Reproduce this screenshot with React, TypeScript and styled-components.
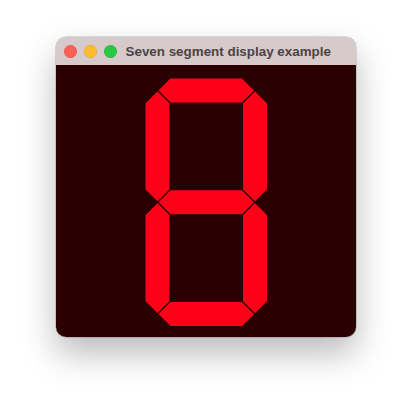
import React from "react";
import styled, { createGlobalStyle } from "styled-components";

const GlobalStyle = createGlobalStyle`
  html, body {
    margin: 0;
    padding: 0;
    background: #ffffff;
  }
  body {
    font-family: "Liberation Sans", Arial, sans-serif;
  }
`;

const Page = styled.div`
  width: 412px;
  height: 412px;
  box-sizing: border-box;
  padding: 37px 56px;
  background: #ffffff;
`;

const Window = styled.div`
  width: 300px;
  height: 300px;
  border-radius: 10px;
  overflow: hidden;
  display: flex;
  flex-direction: column;
  box-shadow: 0 0 0 0.5px rgba(0, 0, 0, 0.25), 0 16px 34px rgba(0, 0, 0, 0.28);
`;

const TitleBar = styled.div`
  height: 28px;
  flex: none;
  display: flex;
  align-items: center;
  padding-left: 7.5px;
  background: #d6caca;
`;

const Light = styled.span<{ color: string }>`
  width: 13px;
  height: 13px;
  border-radius: 50%;
  margin-right: 7px;
  background: ${p => p.color};
  box-shadow: inset 0 0 0 0.5px rgba(0, 0, 0, 0.12);
`;

const Title = styled.div`
  margin-left: 2px;
  font-size: 13.4px;
  font-weight: bold;
  color: #4b4446;
  white-space: nowrap;
`;

const Content = styled.div`
  flex: 1;
  background: #2a0003;
  display: flex;
`;

const BG = "#2a0003";
const ON = "#ff0019";

// digit box in content coordinates
const x0 = 89;
const x1 = 211.5;
const y0 = 13;
const y1 = 261.5;
const t = 25;
const h = t / 2;
const ym = (y0 + y1) / 2;

const pts = (list: number[][]) => list.map(p => p.join(",")).join(" ");

const horizontal = (y: number) =>
  pts([
    [x0 + h, y],
    [x0 + t, y - h],
    [x1 - t, y - h],
    [x1 - h, y],
    [x1 - t, y + h],
    [x0 + t, y + h]
  ]);

const vertical = (x: number, ya: number, yb: number) =>
  pts([
    [x, ya],
    [x + h, ya + h],
    [x + h, yb - h],
    [x, yb],
    [x - h, yb - h],
    [x - h, ya + h]
  ]);

const segments = [
  horizontal(y0 + h),
  horizontal(ym),
  horizontal(y1 - h),
  vertical(x0 + h, y0 + h, ym),
  vertical(x1 - h, y0 + h, ym),
  vertical(x0 + h, ym, y1 - h),
  vertical(x1 - h, ym, y1 - h)
];

const SevenSegment: React.FC = () => (
  <svg width="300" height="272" viewBox="0 0 300 272">
    {segments.map((s, i) => (
      <polygon key={i} points={s} fill={ON} stroke={BG} strokeWidth={1.1} />
    ))}
  </svg>
);

export default function App() {
  return (
    <Page>
      <GlobalStyle />
      <Window>
        <TitleBar>
          <Light color="#fe5f57" />
          <Light color="#febc2e" />
          <Light color="#28c840" />
          <Title>Seven segment display example</Title>
        </TitleBar>
        <Content>
          <SevenSegment />
        </Content>
      </Window>
    </Page>
  );
}
